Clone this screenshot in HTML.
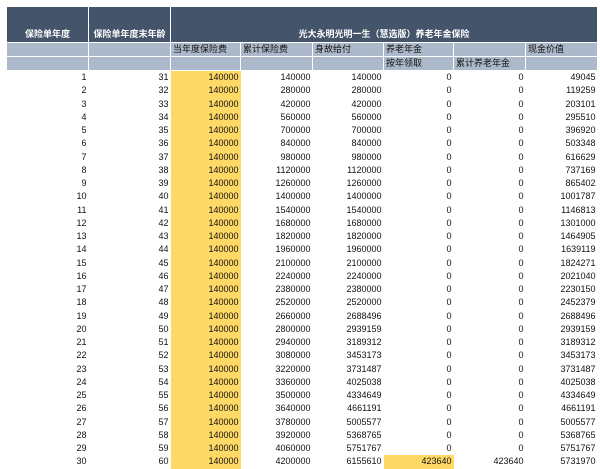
<!DOCTYPE html>
<html><head><meta charset="utf-8"><style>
body{margin:0;width:600px;height:469px;background:#fff;overflow:hidden;font-family:"Liberation Sans","Noto Sans CJK SC",sans-serif;}
table{position:absolute;left:6px;top:6px;border-collapse:collapse;table-layout:fixed;font-size:9px;color:#111;}
td{padding:0 2px;white-space:nowrap;overflow:hidden;height:13.25px;line-height:13px;text-align:right;}
.h td{background:#44546a;color:#fff;font-weight:bold;text-align:center;border:1.5px solid #fff;vertical-align:bottom;height:34px;padding-bottom:1px;}
.s td{background:#acb9ca;border:1.5px solid #fff;text-align:left;height:13px;}
.y{background:#ffd966;}
</style></head><body>
<table>
<colgroup><col style="width:82px"><col style="width:82px"><col style="width:70px"><col style="width:72px"><col style="width:71px"><col style="width:70px"><col style="width:72px"><col style="width:72px"></colgroup>
<tr class="h"><td>保险单年度</td><td>保险单年度末年龄</td><td colspan="6">光大永明光明一生（慧选版）养老年金保险</td></tr>
<tr class="s"><td></td><td></td><td>当年度保险费</td><td>累计保险费</td><td>身故给付</td><td>养老年金</td><td></td><td>现金价值</td></tr>
<tr class="s"><td></td><td></td><td></td><td></td><td></td><td>按年领取</td><td>累计养老年金</td><td></td></tr>
<tr><td>1</td><td>31</td><td class="y">140000</td><td>140000</td><td>140000</td><td>0</td><td>0</td><td>49045</td></tr>
<tr><td>2</td><td>32</td><td class="y">140000</td><td>280000</td><td>280000</td><td>0</td><td>0</td><td>119259</td></tr>
<tr><td>3</td><td>33</td><td class="y">140000</td><td>420000</td><td>420000</td><td>0</td><td>0</td><td>203101</td></tr>
<tr><td>4</td><td>34</td><td class="y">140000</td><td>560000</td><td>560000</td><td>0</td><td>0</td><td>295510</td></tr>
<tr><td>5</td><td>35</td><td class="y">140000</td><td>700000</td><td>700000</td><td>0</td><td>0</td><td>396920</td></tr>
<tr><td>6</td><td>36</td><td class="y">140000</td><td>840000</td><td>840000</td><td>0</td><td>0</td><td>503348</td></tr>
<tr><td>7</td><td>37</td><td class="y">140000</td><td>980000</td><td>980000</td><td>0</td><td>0</td><td>616629</td></tr>
<tr><td>8</td><td>38</td><td class="y">140000</td><td>1120000</td><td>1120000</td><td>0</td><td>0</td><td>737169</td></tr>
<tr><td>9</td><td>39</td><td class="y">140000</td><td>1260000</td><td>1260000</td><td>0</td><td>0</td><td>865402</td></tr>
<tr><td>10</td><td>40</td><td class="y">140000</td><td>1400000</td><td>1400000</td><td>0</td><td>0</td><td>1001787</td></tr>
<tr><td>11</td><td>41</td><td class="y">140000</td><td>1540000</td><td>1540000</td><td>0</td><td>0</td><td>1146813</td></tr>
<tr><td>12</td><td>42</td><td class="y">140000</td><td>1680000</td><td>1680000</td><td>0</td><td>0</td><td>1301000</td></tr>
<tr><td>13</td><td>43</td><td class="y">140000</td><td>1820000</td><td>1820000</td><td>0</td><td>0</td><td>1464905</td></tr>
<tr><td>14</td><td>44</td><td class="y">140000</td><td>1960000</td><td>1960000</td><td>0</td><td>0</td><td>1639119</td></tr>
<tr><td>15</td><td>45</td><td class="y">140000</td><td>2100000</td><td>2100000</td><td>0</td><td>0</td><td>1824271</td></tr>
<tr><td>16</td><td>46</td><td class="y">140000</td><td>2240000</td><td>2240000</td><td>0</td><td>0</td><td>2021040</td></tr>
<tr><td>17</td><td>47</td><td class="y">140000</td><td>2380000</td><td>2380000</td><td>0</td><td>0</td><td>2230150</td></tr>
<tr><td>18</td><td>48</td><td class="y">140000</td><td>2520000</td><td>2520000</td><td>0</td><td>0</td><td>2452379</td></tr>
<tr><td>19</td><td>49</td><td class="y">140000</td><td>2660000</td><td>2688496</td><td>0</td><td>0</td><td>2688496</td></tr>
<tr><td>20</td><td>50</td><td class="y">140000</td><td>2800000</td><td>2939159</td><td>0</td><td>0</td><td>2939159</td></tr>
<tr><td>21</td><td>51</td><td class="y">140000</td><td>2940000</td><td>3189312</td><td>0</td><td>0</td><td>3189312</td></tr>
<tr><td>22</td><td>52</td><td class="y">140000</td><td>3080000</td><td>3453173</td><td>0</td><td>0</td><td>3453173</td></tr>
<tr><td>23</td><td>53</td><td class="y">140000</td><td>3220000</td><td>3731487</td><td>0</td><td>0</td><td>3731487</td></tr>
<tr><td>24</td><td>54</td><td class="y">140000</td><td>3360000</td><td>4025038</td><td>0</td><td>0</td><td>4025038</td></tr>
<tr><td>25</td><td>55</td><td class="y">140000</td><td>3500000</td><td>4334649</td><td>0</td><td>0</td><td>4334649</td></tr>
<tr><td>26</td><td>56</td><td class="y">140000</td><td>3640000</td><td>4661191</td><td>0</td><td>0</td><td>4661191</td></tr>
<tr><td>27</td><td>57</td><td class="y">140000</td><td>3780000</td><td>5005577</td><td>0</td><td>0</td><td>5005577</td></tr>
<tr><td>28</td><td>58</td><td class="y">140000</td><td>3920000</td><td>5368765</td><td>0</td><td>0</td><td>5368765</td></tr>
<tr><td>29</td><td>59</td><td class="y">140000</td><td>4060000</td><td>5751767</td><td>0</td><td>0</td><td>5751767</td></tr>
<tr><td>30</td><td>60</td><td class="y">140000</td><td>4200000</td><td>6155610</td><td class="y">423640</td><td>423640</td><td>5731970</td></tr>
</table>
</body></html>
